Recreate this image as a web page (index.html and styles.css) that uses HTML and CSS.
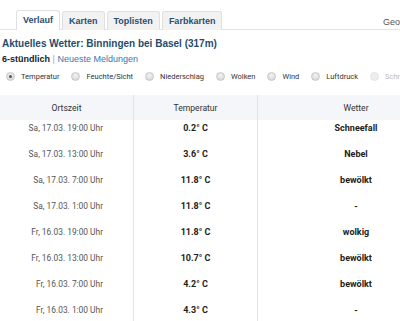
FILE: index.html
```html
<!DOCTYPE html>
<html lang="de">
<head>
<meta charset="utf-8">
<title>Verlauf</title>
<link rel="stylesheet" href="styles.css">
</head>
<body>
<div class="page">
  <div class="tabs">
    <div class="tab active">Verlauf</div>
    <div class="tab">Karten</div>
    <div class="tab">Toplisten</div>
    <div class="tab">Farbkarten</div>
    <div class="tab-right">Geo</div>
  </div>
  <h1 class="title">Aktuelles Wetter: Binningen bei Basel (317m)</h1>
  <div class="sub"><b>6-stündlich</b> <span class="sep">|</span> <a class="link">Neueste Meldungen</a></div>
  <div class="radios">
    <label class="radio"><span class="dot checked"></span>Temperatur</label>
    <label class="radio"><span class="dot"></span>Feuchte/Sicht</label>
    <label class="radio"><span class="dot"></span>Niederschlag</label>
    <label class="radio"><span class="dot"></span>Wolken</label>
    <label class="radio"><span class="dot"></span>Wind</label>
    <label class="radio"><span class="dot"></span>Luftdruck</label>
    <label class="radio disabled"><span class="dot"></span>Schnee</label>
  </div>
  <table class="data">
    <thead>
      <tr><th class="c1">Ortszeit</th><th class="c2">Temperatur</th><th class="c3">Wetter</th></tr>
    </thead>
    <tbody>
      <tr><td class="c1">Sa, 17.03. 19:00 Uhr</td><td class="c2">0.2° C</td><td class="c3">Schneefall</td></tr>
      <tr><td class="c1">Sa, 17.03. 13:00 Uhr</td><td class="c2">3.6° C</td><td class="c3">Nebel</td></tr>
      <tr><td class="c1">Sa, 17.03. 7:00 Uhr</td><td class="c2">11.8° C</td><td class="c3">bewölkt</td></tr>
      <tr><td class="c1">Sa, 17.03. 1:00 Uhr</td><td class="c2">11.8° C</td><td class="c3">-</td></tr>
      <tr><td class="c1">Fr, 16.03. 19:00 Uhr</td><td class="c2">11.8° C</td><td class="c3">wolkig</td></tr>
      <tr><td class="c1">Fr, 16.03. 13:00 Uhr</td><td class="c2">10.7° C</td><td class="c3">bewölkt</td></tr>
      <tr><td class="c1">Fr, 16.03. 7:00 Uhr</td><td class="c2">4.2° C</td><td class="c3">bewölkt</td></tr>
      <tr><td class="c1">Fr, 16.03. 1:00 Uhr</td><td class="c2">4.3° C</td><td class="c3">-</td></tr>
    </tbody>
  </table>
</div>
</body>
</html>
```
FILE: styles.css
```css
html, body {
  margin: 0;
  padding: 0;
  background: #fff;
  overflow: hidden;
}
body {
  font-family: "Liberation Sans", Arial, sans-serif;
  color: #222;
}
.page {
  width: 460px;
}
.tabs {
  display: flex;
  align-items: flex-end;
  height: 30px;
  padding-left: 16px;
  border-bottom: 1px solid #e4e4e4;
  box-sizing: border-box;
}
.tab {
  height: 18px;
  line-height: 18px;
  padding: 0 6px;
  margin-right: 2px;
  margin-bottom: -1px;
  font-size: 9px;
  font-weight: bold;
  color: #2c4f6e;
  background: #f2f2f2;
  border: 1px solid #e0e0e0;
  border-bottom: none;
  border-radius: 3px 3px 0 0;
}
.tab.active {
  background: #fff;
  height: 19px;
}
.tab-right {
  margin-left: auto;
  margin-right: 60px;
  font-size: 9px;
  color: #555;
  line-height: 16px;
  margin-bottom: -1px;
}
.title {
  margin: 7px 0 0 2px;
  font-size: 10px;
  font-weight: bold;
  color: #1f4c6d;
  line-height: 13px;
}
.sub {
  margin: 3px 0 0 2px;
  font-size: 9px;
  line-height: 12px;
  color: #222;
}
.sub .sep {
  color: #aaa;
}
.sub .link {
  color: #3a78b0;
}
.radios {
  display: flex;
  align-items: center;
  padding-left: 6px;
  margin-top: 4px;
  height: 14px;
  font-family: Roboto, "Liberation Sans", sans-serif;
  font-size: 7.5px;
  color: #333;
  white-space: nowrap;
}
.radio {
  display: flex;
  align-items: center;
  margin-right: 12px;
}
.radio.disabled {
  color: #bbb;
}
.dot {
  width: 9px;
  height: 9px;
  border-radius: 50%;
  background: radial-gradient(circle at 50% 35%, #f4f4f4, #cfcfcf);
  border: 1px solid #c8c8c8;
  margin-right: 6px;
  box-sizing: border-box;
  position: relative;
  flex: none;
}
.radio.disabled .dot {
  background: #eee;
  border-color: #e4e4e4;
}
.dot.checked::after {
  content: "";
  position: absolute;
  left: 2px;
  top: 2px;
  width: 3px;
  height: 3px;
  border-radius: 50%;
  background: #555;
}
.data {
  margin-top: 12px;
  border-collapse: collapse;
  table-layout: fixed;
  width: 452px;
  font-family: Roboto, "Liberation Sans", sans-serif;
  font-size: 9px;
}
.data th {
  background: #f4f6f9;
  font-weight: normal;
  color: #333;
  height: 25px;
  padding: 0;
  font-size: 8.6px;
}
.data td {
  height: 26px;
  padding: 2px 0 12px;
  line-height: 12px;
  box-sizing: border-box;
  vertical-align: top;
}
.data .c1 { width: 133px; }
.data .c2 { width: 123px; border-left: 1px solid #e3e3e3; }
.data .c3 { width: 196px; border-left: 1px solid #e3e3e3; }
.data td.c1 {
  text-align: right;
  padding-right: 30px;
  color: #555;
  font-size: 8.4px;
}
.data td.c2 {
  text-align: center;
  font-weight: bold;
  color: #222;
}
.data td.c3 {
  text-align: center;
  font-weight: bold;
  color: #222;
}
```
